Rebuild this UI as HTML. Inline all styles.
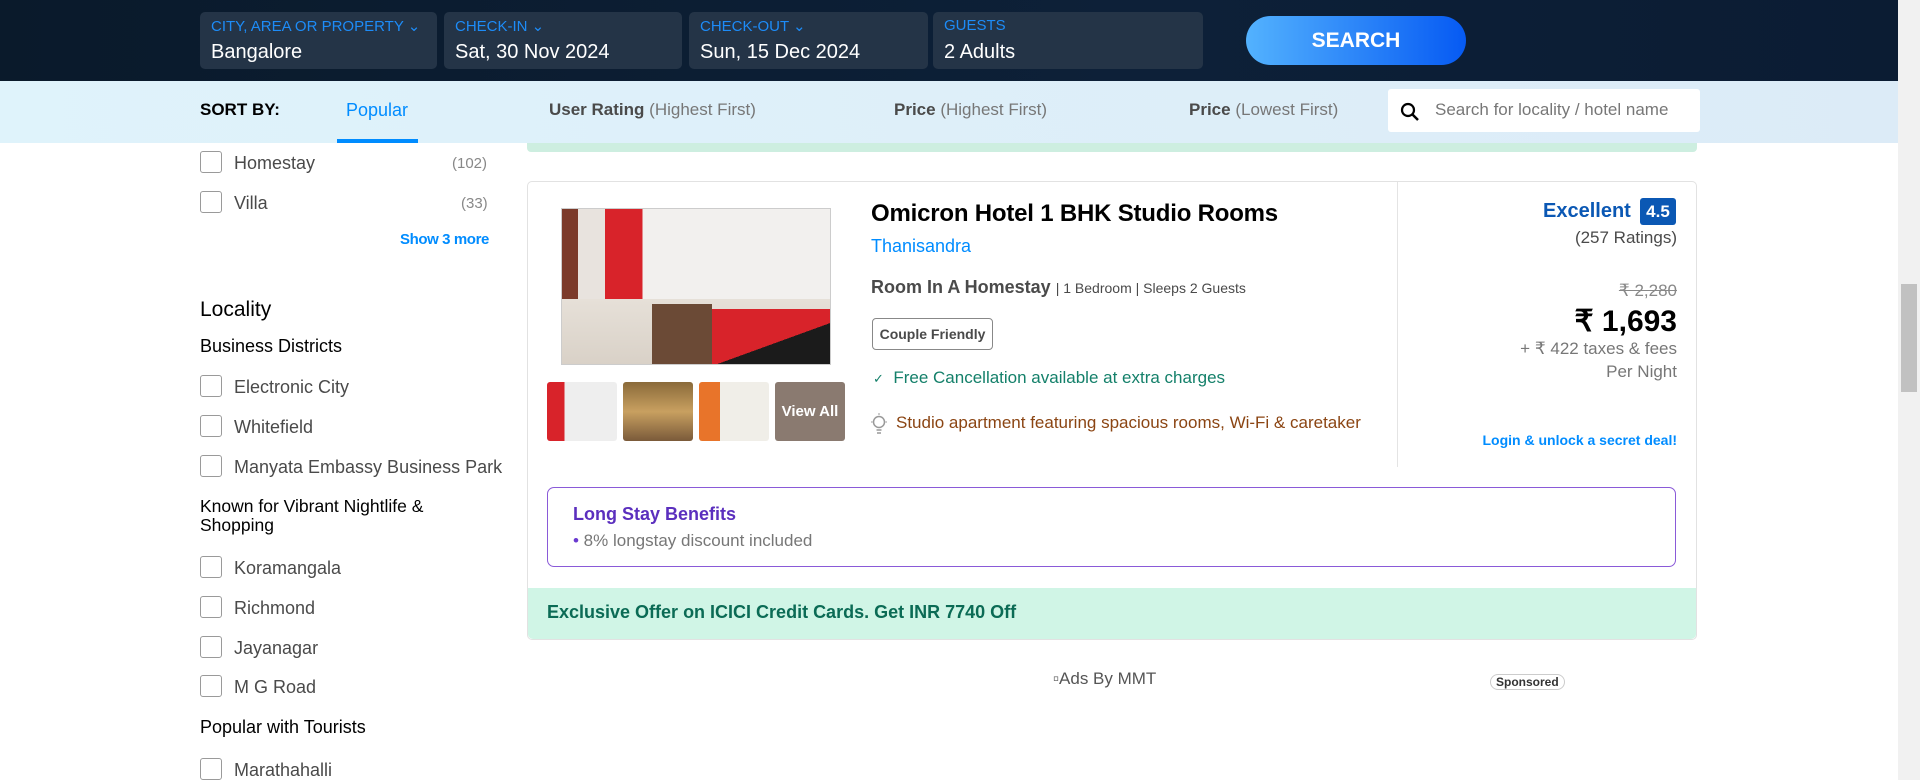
<!DOCTYPE html>
<html><head><style>
*{box-sizing:border-box;margin:0;padding:0}
body{width:1920px;height:780px;overflow:hidden;background:#fff;font-family:"Liberation Sans",sans-serif;position:relative;color:#222}
.a{position:absolute;white-space:nowrap}
.hdr{position:absolute;left:0;top:0;width:1898px;height:81px;background:linear-gradient(90deg,#0a1a2b,#0d2038 60%,#0b1c33)}
.fld{position:absolute;top:12px;height:57px;background:#243447;border-radius:5px}
.fld .l{position:absolute;left:11px;top:5px;font-size:15px;color:#1d8cf8}
.fld .v{position:absolute;left:11px;top:29px;font-size:20px;color:#fff}
.sort{position:absolute;left:0;top:81px;width:1898px;height:62px;background:linear-gradient(90deg,#dff3fb,#dcebf7)}
.cb{position:absolute;width:22px;height:22px;border:1.5px solid #9a9a9a;border-radius:3px;background:#fff}
.t{font-size:18px;color:#4a4a4a}
.h{font-size:18px;color:#000}
.th{position:absolute;top:382px;width:70px;height:59px;border-radius:3px}
</style></head><body>
<div class="hdr"></div>
<div class="fld" style="left:200px;width:237px"><div class="l">CITY, AREA OR PROPERTY ⌄</div><div class="v">Bangalore</div></div>
<div class="fld" style="left:444px;width:238px"><div class="l">CHECK-IN ⌄</div><div class="v">Sat, 30 Nov 2024</div></div>
<div class="fld" style="left:689px;width:239px"><div class="l">CHECK-OUT ⌄</div><div class="v">Sun, 15 Dec 2024</div></div>
<div class="fld" style="left:933px;width:270px"><div class="l">GUESTS</div><div class="v">2 Adults</div></div>
<div class="a" style="left:1246px;top:16px;width:220px;height:49px;border-radius:25px;background:linear-gradient(90deg,#53b2fe,#065af3);color:#fff;font-weight:bold;font-size:21px;text-align:center;line-height:49px">SEARCH</div>
<div class="sort"></div>
<div class="a" style="left:200px;top:100px;font-size:17px;font-weight:bold;color:#000">SORT BY:</div>
<div class="a" style="left:346px;top:100px;font-size:18px;color:#008cff">Popular</div>
<div class="a" style="left:337px;top:139px;width:81px;height:4px;background:#008cff"></div>
<div class="a" style="left:549px;top:100px;font-size:17px;color:#4a4a4a"><b>User Rating</b> <span style="color:#777">(Highest First)</span></div>
<div class="a" style="left:894px;top:100px;font-size:17px;color:#4a4a4a"><b>Price</b> <span style="color:#777">(Highest First)</span></div>
<div class="a" style="left:1189px;top:100px;font-size:17px;color:#4a4a4a"><b>Price</b> <span style="color:#777">(Lowest First)</span></div>
<div class="a" style="left:1388px;top:89px;width:312px;height:43px;background:#fff;border-radius:3px"></div>
<svg class="a" style="left:1400px;top:102px" width="20" height="20"><circle cx="8" cy="8" r="6" stroke="#000" stroke-width="2.2" fill="none"/><line x1="12.5" y1="12.5" x2="18" y2="18" stroke="#000" stroke-width="2.5"/></svg>
<div class="a" style="left:1435px;top:100px;font-size:17px;color:#777">Search for locality / hotel name</div>
<div class="a" style="left:527px;top:143px;width:1170px;height:9px;background:#cdeee0;border-radius:0 0 4px 4px"></div>
<!-- sidebar -->
<div class="cb" style="left:200px;top:151px"></div><div class="a t" style="left:234px;top:153px">Homestay</div><div class="a" style="left:452px;top:155px;font-size:15px;color:#888">(102)</div>
<div class="cb" style="left:200px;top:191px"></div><div class="a t" style="left:234px;top:193px">Villa</div><div class="a" style="left:461px;top:195px;font-size:15px;color:#888">(33)</div>
<div class="a" style="left:400px;top:231px;font-size:15px;font-weight:bold;color:#008cff;letter-spacing:-0.4px">Show 3 more</div>
<div class="a" style="left:200px;top:298px;font-size:21px;color:#000">Locality</div>
<div class="a h" style="left:200px;top:336px">Business Districts</div>
<div class="cb" style="left:200px;top:375px"></div><div class="a t" style="left:234px;top:377px">Electronic City</div>
<div class="cb" style="left:200px;top:415px"></div><div class="a t" style="left:234px;top:417px">Whitefield</div>
<div class="cb" style="left:200px;top:455px"></div><div class="a t" style="left:234px;top:457px">Manyata Embassy Business Park</div>
<div class="a h" style="left:200px;top:497px;line-height:19px;font-size:17.5px">Known for Vibrant Nightlife &amp;<br>Shopping</div>
<div class="cb" style="left:200px;top:556px"></div><div class="a t" style="left:234px;top:558px">Koramangala</div>
<div class="cb" style="left:200px;top:596px"></div><div class="a t" style="left:234px;top:598px">Richmond</div>
<div class="cb" style="left:200px;top:636px"></div><div class="a t" style="left:234px;top:638px">Jayanagar</div>
<div class="cb" style="left:200px;top:675px"></div><div class="a t" style="left:234px;top:677px">M G Road</div>
<div class="a h" style="left:200px;top:717px">Popular with Tourists</div>
<div class="cb" style="left:200px;top:758px"></div><div class="a t" style="left:234px;top:760px">Marathahalli</div>
<!-- card -->
<div class="a" style="left:527px;top:181px;width:1170px;height:459px;border:1px solid #e2e2e2;border-radius:5px;background:#fff"></div>
<div class="a" style="left:1397px;top:182px;width:1px;height:285px;background:#e4e4e4"></div>
<div class="a" style="left:561px;top:208px;width:270px;height:157px;background:linear-gradient(90deg,#7b3a2a 0 6%,#e8e3de 6% 16%,#d8232a 16% 30%,#f2f0ee 30% 100%);border:1px solid #ccc;overflow:hidden">
<div style="position:absolute;left:0;top:90px;width:270px;height:70px;background:linear-gradient(180deg,#e6e0d8,#d8d0c6)"></div>
<div style="position:absolute;left:90px;top:95px;width:60px;height:60px;background:#6b4a36"></div>
<div style="position:absolute;left:150px;top:100px;width:120px;height:60px;background:linear-gradient(160deg,#d8232a 0 55%,#1b1b1b 55%)"></div>
</div>
<div class="th" style="left:547px;background:linear-gradient(90deg,#d8232a 0 25%,#eee 25%)"></div>
<div class="th" style="left:623px;background:linear-gradient(180deg,#8a6a3a,#c8a060 50%,#7a5a3a)"></div>
<div class="th" style="left:699px;background:linear-gradient(90deg,#e8742a 0 30%,#f0eee8 30%)"></div>
<div class="th" style="left:775px;background:#8a7a70;color:#fff;font-weight:bold;font-size:15px;text-align:center;line-height:59px">View All</div>
<div class="a" style="left:871px;top:200px;font-size:24px;font-weight:bold;color:#000;letter-spacing:-0.2px">Omicron Hotel 1 BHK Studio Rooms</div>
<div class="a" style="left:871px;top:236px;font-size:18px;color:#008cff">Thanisandra</div>
<div class="a" style="left:871px;top:277px;font-size:18px;color:#4a4a4a"><b>Room In A Homestay</b> <span style="font-size:14px">| 1 Bedroom | Sleeps 2 Guests</span></div>
<div class="a" style="left:872px;top:318px;width:121px;height:32px;border:1px solid #888;border-radius:4px;font-size:14px;color:#4a4a4a;text-align:center;line-height:30px;font-weight:bold">Couple Friendly</div>
<div class="a" style="left:873px;top:368px;font-size:17px;color:#14806a"><span style="font-size:13px">✓</span>&nbsp; Free Cancellation available at extra charges</div>
<svg class="a" style="left:870px;top:413px" width="18" height="22"><circle cx="9" cy="9" r="5.5" fill="none" stroke="#999" stroke-width="1.5"/><line x1="6.5" y1="17" x2="11.5" y2="17" stroke="#999" stroke-width="1.5"/><line x1="7" y1="20" x2="11" y2="20" stroke="#999" stroke-width="1.5"/><line x1="9" y1="0" x2="9" y2="2" stroke="#999"/><line x1="1" y1="9" x2="2.5" y2="9" stroke="#999"/><line x1="15.5" y1="9" x2="17" y2="9" stroke="#999"/></svg>
<div class="a" style="left:896px;top:413px;font-size:17px;color:#8b4513">Studio apartment featuring spacious rooms, Wi-Fi &amp; caretaker</div>
<div class="a" style="left:1543px;top:200px;font-size:20px;font-weight:bold;color:#0b58b4">Excellent</div>
<div class="a" style="left:1640px;top:198px;width:36px;height:27px;background:#0b58b4;border-radius:3px;color:#fff;font-weight:bold;font-size:17px;text-align:center;line-height:27px">4.5</div>
<div class="a" style="right:243px;top:228px;font-size:17px;color:#4a4a4a">(257 Ratings)</div>
<div class="a" style="right:243px;top:281px;font-size:17px;color:#888;text-decoration:line-through">₹ 2,280</div>
<div class="a" style="right:243px;top:304px;font-size:30px;font-weight:bold;color:#000">₹ 1,693</div>
<div class="a" style="right:243px;top:339px;font-size:17px;color:#777">+ ₹ 422 taxes &amp; fees</div>
<div class="a" style="right:243px;top:362px;font-size:17px;color:#777">Per Night</div>
<div class="a" style="right:243px;top:432px;font-size:14px;font-weight:bold;color:#008cff">Login &amp; unlock a secret deal!</div>
<div class="a" style="left:547px;top:487px;width:1129px;height:80px;border:1.5px solid #8a5ad8;border-radius:7px"></div>
<div class="a" style="left:573px;top:504px;font-size:18px;font-weight:bold;color:#5b2fbe">Long Stay Benefits</div>
<div class="a" style="left:573px;top:531px;font-size:17px;color:#777"><span style="color:#6a3ad0">•</span> 8% longstay discount included</div>
<div class="a" style="left:528px;top:588px;width:1168px;height:51px;background:#d0f5e6;border-radius:0 0 5px 5px"></div>
<div class="a" style="left:547px;top:602px;font-size:18px;font-weight:bold;color:#0b6b55">Exclusive Offer on ICICI Credit Cards. Get INR 7740 Off</div>
<div class="a" style="left:1053px;top:669px;font-size:17px;color:#555">▫Ads By MMT</div>
<div class="a" style="left:1490px;top:674px;padding:0 5px;font-size:12px;border:1px solid #ccc;border-radius:8px;color:#333;font-weight:bold">Sponsored</div>
<div class="a" style="left:1898px;top:0;width:22px;height:780px;background:#f1f1f1"></div>
<div class="a" style="left:1901px;top:284px;width:16px;height:108px;background:#c1c1c1"></div>
</body></html>
